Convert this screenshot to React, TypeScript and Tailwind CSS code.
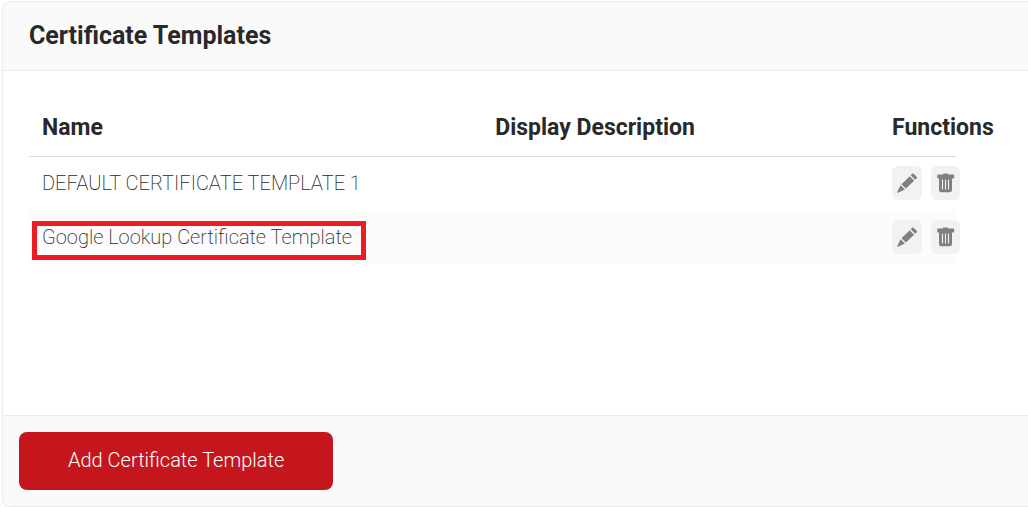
type Template = { name: string; description: string; highlighted?: boolean };

const templates: Template[] = [
  { name: "DEFAULT CERTIFICATE TEMPLATE 1", description: "" },
  { name: "Google Lookup Certificate Template", description: "", highlighted: true },
];

function PencilIcon() {
  return (
    <svg viewBox="0 0 20 20" className="size-5" fill="#808080" aria-hidden="true">
      <path d="M15.200.800a1 1 0 0 1 1.400 0l3 3a1 1 0 0 1 0 1.400l-1.500 1.500-4.400-4.400z" />
      <path d="M12.700 3.300 17.100 7.700 8.900 15.600 4.500 11.200z" />
      <path d="M3.600 12.200 7.900 16.500 1 19.800a.6.6 0 0 1-.8-.8z" />
    </svg>
  );
}

function TrashIcon() {
  return (
    <svg viewBox="0 0 18 20" className="h-5 w-[18px]" aria-hidden="true">
      <path
        fill="#808080"
        d="M5.700 1.400 6.500.5h4l.8 .9h4.900q1 0 1 1v2q0 1-1 1H15v11.500a2.400 2.400 0 0 1-2.400 2.400H4.400A2.400 2.400 0 0 1 2 16.900V5.400h-.8q-1 0-1-1v-2q0-1 1-1z"
      />
      <path stroke="#f2f2f2" strokeWidth="1.100" strokeLinecap="round" d="M5.500 7v9M8.500 7v9M11.500 7v9" />
    </svg>
  );
}

export default function App() {
  return (
    <main className="overflow-hidden bg-white pt-px pl-0.5 font-['Roboto',sans-serif] text-[#292929]">
      <section className="overflow-hidden rounded-l-lg border border-r-0 border-[#ebebeb] bg-white">
        <header className="border-b border-[#ebebeb] bg-[#fafafa] px-[26px] py-[18px]">
          <h1 className="text-[25px] leading-8 font-bold">Certificate Templates</h1>
        </header>

        <div className="min-h-86 pt-7 pr-18 pl-[26px]">
          <table className="w-full table-fixed border-separate border-spacing-0 text-left">
            <colgroup>
              <col className="w-[49%]" />
              <col />
              <col className="w-[77px]" />
            </colgroup>
            <thead>
              <tr className="h-[58px] text-[23px] leading-8 font-semibold whitespace-nowrap">
                <th scope="col" className="border-b border-[#dbdbdb] px-[13px]">Name</th>
                <th scope="col" className="border-b border-[#dbdbdb] px-3">Display Description</th>
                <th scope="col" className="border-b border-[#dbdbdb] px-[13px]">Functions</th>
              </tr>
            </thead>
            <tbody className="text-xl leading-7 font-extralight">
              {templates.map((t) => (
                <tr key={t.name} className="h-[54px] even:bg-[#fcfcfc]">
                  <td className="px-[13px] pb-0.5">
                    <span className="relative whitespace-nowrap">
                      {t.name}
                      {t.highlighted && (
                        <span className="absolute -top-1 -right-3.5 -bottom-[11px] -left-2.5 border-5 border-[#ed1c24]" />
                      )}
                    </span>
                  </td>
                  <td className="px-3 pb-0.5">{t.description}</td>
                  <td className="pb-0.5 pl-[13px]">
                    <div className="flex w-max gap-[9px]">
                      <button
                        type="button"
                        aria-label={`Edit ${t.name}`}
                        className="flex h-[34px] w-[30px] items-center justify-center rounded-md bg-[#f2f2f2]"
                      >
                        <PencilIcon />
                      </button>
                      <button
                        type="button"
                        aria-label={`Delete ${t.name}`}
                        className="flex h-[34px] w-[29px] items-center justify-center rounded-md bg-[#f2f2f2]"
                      >
                        <TrashIcon />
                      </button>
                    </div>
                  </td>
                </tr>
              ))}
            </tbody>
          </table>
        </div>

        <footer className="border-t border-[#ebebeb] bg-[#fafafa] p-4">
          <button
            type="button"
            className="rounded-lg bg-[#c4161c] px-[49px] pt-3.5 pb-4 text-xl leading-7 font-light text-white"
          >
            Add Certificate Template
          </button>
        </footer>
      </section>
    </main>
  );
}
